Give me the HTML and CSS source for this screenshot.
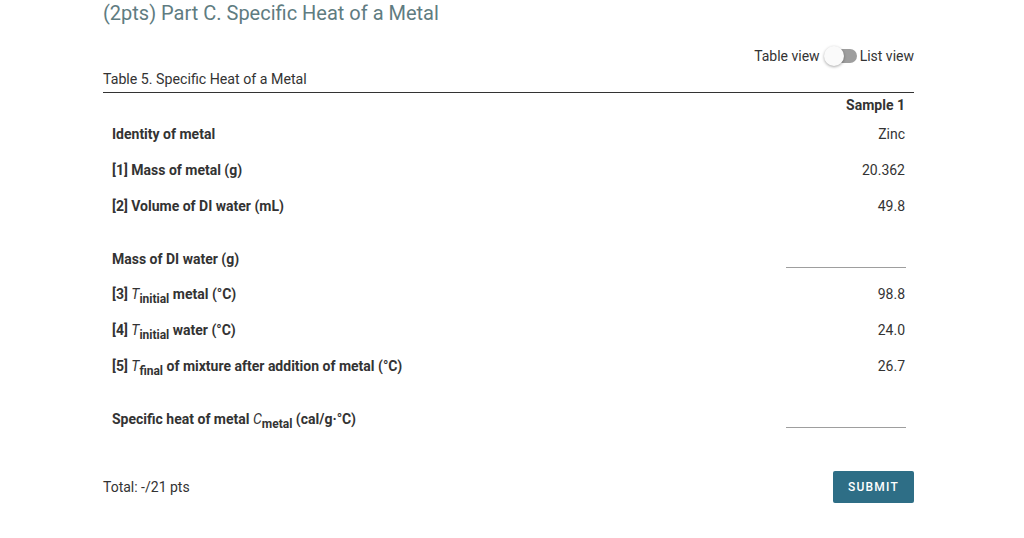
FILE: index.html
```html
<!DOCTYPE html>
<html>
<head>
  <link rel="stylesheet" href="styles.css">
</head>
<body>
  <div class="page">
    <h2 class="part-title">(2pts) Part C. Specific Heat of a Metal</h2>

    <div class="view-toggle">
      <span>Table view</span>
      <span class="switch"><span class="thumb"></span></span>
      <span>List view</span>
    </div>

    <div class="caption">Table 5. Specific Heat of a Metal</div>

    <table class="data-table">
      <thead>
        <tr class="head-row">
          <th></th>
          <th class="value">Sample 1</th>
        </tr>
      </thead>
      <tbody>
        <tr>
          <td class="label">Identity of metal</td>
          <td class="value">Zinc</td>
        </tr>
        <tr>
          <td class="label">[1] Mass of metal (g)</td>
          <td class="value">20.362</td>
        </tr>
        <tr>
          <td class="label">[2] Volume of DI water (mL)</td>
          <td class="value">49.8</td>
        </tr>
        <tr class="spacer"><td colspan="2"></td></tr>
        <tr class="input-row">
          <td class="label">Mass of DI water (g)</td>
          <td class="value"><span class="blank"></span></td>
        </tr>
        <tr>
          <td class="label">[3] <i>T</i><sub>initial</sub> metal (°C)</td>
          <td class="value">98.8</td>
        </tr>
        <tr>
          <td class="label">[4] <i>T</i><sub>initial</sub> water (°C)</td>
          <td class="value">24.0</td>
        </tr>
        <tr>
          <td class="label">[5] <i>T</i><sub>final</sub> of mixture after addition of metal (°C)</td>
          <td class="value">26.7</td>
        </tr>
        <tr class="spacer"><td colspan="2"></td></tr>
        <tr class="input-row">
          <td class="label">Specific heat of metal <i>C</i><sub>metal</sub> (cal/g·°C)</td>
          <td class="value"><span class="blank"></span></td>
        </tr>
      </tbody>
    </table>

    <div class="footer">
      <span class="total">Total: -/21 pts</span>
      <button class="submit">SUBMIT</button>
    </div>
  </div>
</body>
</html>
```

FILE: styles.css
```css
body {
  margin: 0;
  font-family: Roboto, "Liberation Sans", sans-serif;
  color: #333;
  background: #fff;
}
.page {
  width: 811px;
  margin-left: 103px;
}
.part-title {
  margin: 0;
  padding-top: 1px;
  font-size: 20px;
  font-weight: 400;
  line-height: 24px;
  color: #5f7c81;
}
.view-toggle {
  display: flex;
  justify-content: flex-end;
  align-items: center;
  gap: 5px;
  margin-top: 23px;
  font-size: 14px;
  line-height: 16px;
  color: #333;
}
.switch {
  position: relative;
  width: 30px;
  height: 14px;
  margin-left: 2px;
  margin-right: -2px;
  border-radius: 7px;
  background: #9e9e9e;
}
.thumb {
  position: absolute;
  left: -3px;
  top: -3px;
  width: 20px;
  height: 20px;
  border-radius: 50%;
  background: #fafafa;
  box-shadow: 0 1px 3px rgba(0,0,0,0.35);
}
.caption {
  margin-top: 7px;
  font-size: 14.2px;
  line-height: 16px;
  padding-bottom: 5px;
  border-bottom: 1px solid #333;
}
.data-table {
  width: 100%;
  border-collapse: collapse;
  font-size: 14px;
}
.data-table td, .data-table th {
  padding: 0 9px;
}
.head-row th {
  height: 23px;
  font-weight: 700;
  vertical-align: middle;
}
.data-table tbody tr {
  height: 36px;
}
.data-table tbody tr.input-row {
  height: 34px;
}
.data-table tbody tr.spacer {
  height: 18px;
}
.label {
  font-weight: 700;
  text-align: left;
}
.label i {
  font-weight: 400;
}
.label sub {
  font-size: 12px;
  line-height: 0;
}
.value {
  text-align: right;
  font-weight: 400;
}
th.value {
  font-weight: 700;
}
.blank {
  display: inline-block;
  width: 120px;
  height: 15px;
  margin-right: -1px;
  border-bottom: 1px solid #9e9e9e;
  vertical-align: middle;
}
.footer {
  display: flex;
  justify-content: space-between;
  align-items: center;
  margin-top: 35px;
}
.total {
  font-size: 14px;
}
.submit {
  width: 81px;
  height: 32px;
  border: none;
  border-radius: 2px;
  background: #2e6e86;
  color: #fff;
  font-family: Roboto, "Liberation Sans", sans-serif;
  font-size: 12px;
  font-weight: 500;
  letter-spacing: 1.2px;
}
```
